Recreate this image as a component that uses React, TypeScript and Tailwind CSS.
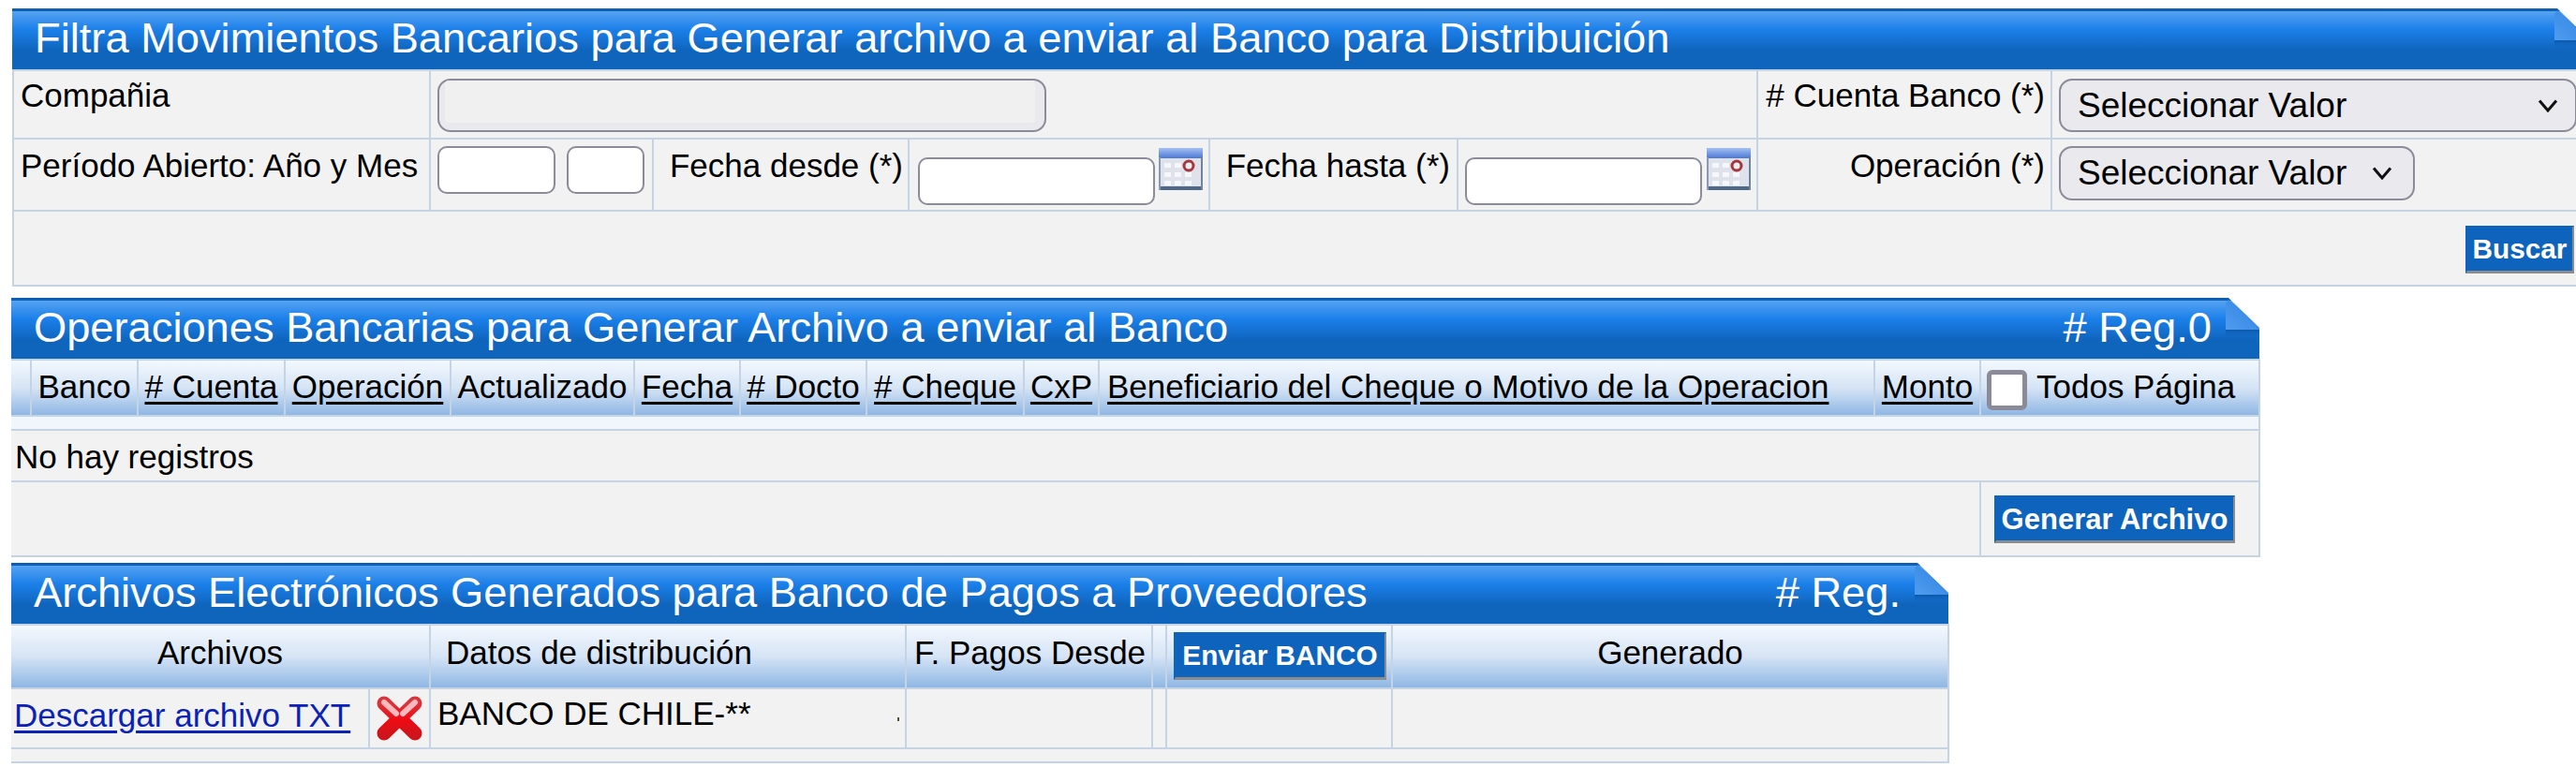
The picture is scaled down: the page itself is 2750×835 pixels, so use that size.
import React from "react";

const sans = "font-['Liberation_Sans',Arial,sans-serif]";
const bd = "border-2 border-[#c4d4e4]";
const td = `${bd} bg-[#f2f2f2] p-0 align-top text-[35px] leading-[38px] text-black`;
const th = `${bd} p-0 align-middle text-[35px] leading-[38px] text-black font-normal bg-gradient-to-b from-[#f3f8fe] via-[#d6e4f5] to-[#8fb7e4]`;
const field = "block rounded-[10px] border-2 border-[#8b8b99] bg-white";
const btn =
  "bg-[#0e63bd] text-white font-bold leading-none border-t-2 border-l-2 border-[#0e63bd] border-r-2 border-b-[3px] border-r-[#8c8c8c] border-b-[#8c8c8c]";
const sel =
  "flex items-center justify-between rounded-[14px] border-2 border-[#8b8b99] bg-[#e9e9ee] pl-[18px] text-[37px] text-black";

function Fold({ right = 0, id }: { right?: number; id: string }) {
  return (
    <svg className="absolute top-0" style={{ right }} width="36" height="46" viewBox="0 0 36 46">
      <defs>
        <linearGradient id={id} x1="0" y1="1" x2="1" y2="0">
          <stop offset="0" stopColor="#4f9df0" />
          <stop offset="1" stopColor="#2f80e0" />
        </linearGradient>
        <linearGradient id={id + "s"} x1="0" y1="0" x2="0" y2="1">
          <stop offset="0" stopColor="#0a4f9c" stopOpacity="0.75" />
          <stop offset="1" stopColor="#0e63bd" stopOpacity="0" />
        </linearGradient>
      </defs>
      <rect x="0" y="34" width="36" height="8" fill={`url(#${id}s)`} />
      <polygon points="3,2 36,32 36,34 0,34 0,6" fill={`url(#${id})`} />
      <polygon points="3,0 36,0 36,32" fill="#ffffff" />
    </svg>
  );
}

function Header({
  title,
  reg,
  foldRight = 0,
  id,
}: {
  title: string;
  reg?: string;
  foldRight?: number;
  id: string;
}) {
  return (
    <div className="relative flex h-[65px] items-center justify-between overflow-hidden bg-[linear-gradient(#0e5fb4_0,#0e5fb4_3px,#55a3f2_3px,#1b7fe9_35%,#0f64bc_70%)] pl-[24px] pr-[51px] text-[45.25px] leading-none text-white">
      <span className="-mt-[2px]">{title}</span>
      {reg && <span className="-mt-[2px]">{reg}</span>}
      <Fold right={foldRight} id={id} />
    </div>
  );
}

function Chevron() {
  return (
    <svg width="22" height="14" viewBox="0 0 22 14" className="shrink-0">
      <path d="M2 1.5 L11 12 L20 1.5" fill="none" stroke="#111" strokeWidth="3" />
    </svg>
  );
}

function Calendar() {
  return (
    <svg width="47" height="45" viewBox="0 0 47 45" className="mt-[9px] shrink-0">
      <defs>
        <linearGradient id="calb" x1="0" y1="0" x2="0" y2="1">
          <stop offset="0" stopColor="#a5c0f2" />
          <stop offset="1" stopColor="#4a78d6" />
        </linearGradient>
      </defs>
      <rect width="47" height="45" fill="#dfe2ea" />
      <rect width="47" height="11" fill="url(#calb)" />
      <rect y="41" width="47" height="4" fill="#4f6788" />
      <rect x="45" y="10" width="2" height="35" fill="#6f83a2" />
      <rect y="10" width="2" height="35" fill="#8a9ab4" />
      {[6, 17, 28].map((x) =>
        [16, 26, 35].map((y) => (
          <rect key={`${x}-${y}`} x={x} y={y} width="7" height="5" fill="#f6f7fa" />
        )),
      )}
      <circle cx="32" cy="19" r="5" fill="#eee" stroke="#a8343c" strokeWidth="3" />
    </svg>
  );
}

function RedX() {
  return (
    <svg width="51" height="50" viewBox="0 0 51 50" className="block">
      <defs>
        <linearGradient id="xr" x1="0" y1="0" x2="0" y2="1">
          <stop offset="0" stopColor="#d8343c" />
          <stop offset="0.55" stopColor="#f00a12" />
          <stop offset="1" stopColor="#d0141c" />
        </linearGradient>
      </defs>
      <path d="M9 9 L42 41 M42 9 L9 41" stroke="url(#xr)" strokeWidth="15" strokeLinecap="round" />
      <path d="M9 8 L22 20 M42 8 L29 20" stroke="#ffb9bc" strokeWidth="6" strokeLinecap="round" />
    </svg>
  );
}

function Lnk({ children }: { children: React.ReactNode }) {
  return <span className="underline underline-offset-[4px]">{children}</span>;
}

export default function App() {
  return (
    <div className={`${sans} w-[2750px] bg-white pt-[9px]`}>
      {/* Filtros */}
      <section className="ml-[13px] w-[2737px]">
        <Header
          id="f1"
          foldRight={-13}
          title="Filtra Movimientos Bancarios para Generar archivo a enviar al Banco para Distribuición"
        />
        <table className="w-[2737px] table-fixed border-collapse">
          <colgroup>
            <col className="w-[445px]" />
            <col className="w-[238px]" />
            <col className="w-[273px]" />
            <col className="w-[321px]" />
            <col className="w-[265px]" />
            <col className="w-[320px]" />
            <col className="w-[314px]" />
            <col className="w-[561px]" />
          </colgroup>
          <tbody>
            <tr className="h-[73px]">
              <td className={`${td} pl-[7px] pt-[7px]`}>Compañia</td>
              <td colSpan={5} className={`${td} pl-[7px] pt-[8px]`}>
                <div className="h-[57px] w-[650px] rounded-[14px] border-2 border-[#8b8b99] bg-[#e9e9ee] p-[0_10px_8px_6px]">
                  <div className="h-full rounded-[4px] bg-[#f0f0f0]" />
                </div>
              </td>
              <td className={`${td} pr-[6px] pt-[7px] text-right whitespace-nowrap`}># Cuenta Banco (*)</td>
              <td className={`${td} pl-[7px] pt-[8px]`}>
                <div className={`${sel} h-[57px] w-[553px] pr-[18px]`}>
                  <span>Seleccionar Valor</span>
                  <Chevron />
                </div>
              </td>
            </tr>
            <tr className="h-[77px]">
              <td className={`${td} pl-[7px] pt-[9px] whitespace-nowrap`}>Período Abierto: Año y Mes</td>
              <td className={`${td} pl-[7px] pt-[7px]`}>
                <div className="flex gap-[12px]">
                  <div className={`${field} h-[51px] w-[126px]`} />
                  <div className={`${field} h-[51px] w-[83px]`} />
                </div>
              </td>
              <td className={`${td} pr-[5px] pt-[9px] text-right whitespace-nowrap`}>Fecha desde (*)</td>
              <td className={`${td} pl-[9px]`}>
                <div className="flex items-start gap-[4px]">
                  <div className={`${field} mt-[19px] h-[51px] w-[253px]`} />
                  <Calendar />
                </div>
              </td>
              <td className={`${td} pr-[7px] pt-[9px] text-right whitespace-nowrap`}>Fecha hasta (*)</td>
              <td className={`${td} pl-[7px]`}>
                <div className="flex items-start gap-[5px]">
                  <div className={`${field} mt-[19px] h-[51px] w-[253px]`} />
                  <Calendar />
                </div>
              </td>
              <td className={`${td} pr-[6px] pt-[9px] text-right whitespace-nowrap`}>Operación (*)</td>
              <td className={`${td} pl-[7px] pt-[7px]`}>
                <div className={`${sel} h-[58px] w-[380px] pr-[22px]`}>
                  <span>Seleccionar Valor</span>
                  <Chevron />
                </div>
              </td>
            </tr>
            <tr className="h-[80px]">
              <td colSpan={8} className={`${td} pr-0 pt-[15px] text-right`}>
                <button className={`${btn} mr-[2px] h-[51px] w-[116px] text-[29.75px]`}>Buscar</button>
              </td>
            </tr>
          </tbody>
        </table>
      </section>

      {/* Operaciones */}
      <section className="ml-[12px] mt-[12px] w-[2400px]">
        <Header id="f2" title="Operaciones Bancarias para Generar Archivo a enviar al Banco" reg="# Reg.0" />
        <table className="w-[2400px] table-fixed border-collapse">
          <colgroup>
            <col className="w-[21px]" />
            <col className="w-[114px]" />
            <col className="w-[157px]" />
            <col className="w-[177px]" />
            <col className="w-[196px]" />
            <col className="w-[113px]" />
            <col className="w-[135px]" />
            <col className="w-[168px]" />
            <col className="w-[80px]" />
            <col className="w-[828px]" />
            <col className="w-[113px]" />
            <col className="w-[298px]" />
          </colgroup>
          <tbody>
            <tr className="h-[60px]">
              <th className={`${th} border-l-0`} />
              <th className={`${th} pb-[2px] text-center whitespace-nowrap`}>Banco</th>
              <th className={`${th} pb-[2px] text-center whitespace-nowrap`}><Lnk># Cuenta</Lnk></th>
              <th className={`${th} pb-[2px] text-center whitespace-nowrap`}><Lnk>Operación</Lnk></th>
              <th className={`${th} pb-[2px] text-center whitespace-nowrap`}>Actualizado</th>
              <th className={`${th} pb-[2px] text-center whitespace-nowrap`}><Lnk>Fecha</Lnk></th>
              <th className={`${th} pb-[2px] text-center whitespace-nowrap`}><Lnk># Docto</Lnk></th>
              <th className={`${th} pb-[2px] text-center whitespace-nowrap`}><Lnk># Cheque</Lnk></th>
              <th className={`${th} pb-[2px] text-center whitespace-nowrap`}><Lnk>CxP</Lnk></th>
              <th className={`${th} pb-[2px] pl-[8px] text-left whitespace-nowrap`}><Lnk>Beneficiario del Cheque o Motivo de la Operacion</Lnk></th>
              <th className={`${th} pb-[2px] text-center whitespace-nowrap`}><Lnk>Monto</Lnk></th>
              <th className={th}>
                <div className="flex items-center gap-[10px] pl-[6px] whitespace-nowrap">
                  <span className="mt-[5px] h-[43px] w-[43px] shrink-0 rounded-[6px] border-[5px] border-[#8a8a99] bg-white" />
                  <span className="-mt-[2px]">Todos Página</span>
                </div>
              </th>
            </tr>
            <tr className="h-[15px]">
              <td colSpan={12} className={`${bd} border-l-0 bg-[#f1f6fc] p-0`} />
            </tr>
            <tr className="h-[55px]">
              <td colSpan={12} className={`${td} border-l-0 pl-[4px] pt-[9px]`}>No hay registros</td>
            </tr>
            <tr className="h-[80px]">
              <td colSpan={11} className={`${td} border-l-0`} />
              <td className={`${td} pl-[14px] pt-[14px]`}>
                <button className={`${btn} h-[51px] w-[257px] text-[31px] whitespace-nowrap`}>Generar Archivo</button>
              </td>
            </tr>
          </tbody>
        </table>
      </section>

      {/* Archivos */}
      <section className="ml-[12px] mt-[6px] w-[2068px]">
        <Header id="f3" title="Archivos Electrónicos Generados para Banco de Pagos a Proveedores" reg="# Reg." />
        <table className="w-[2068px] table-fixed border-collapse">
          <colgroup>
            <col className="w-[382px]" />
            <col className="w-[65px]" />
            <col className="w-[508px]" />
            <col className="w-[263px]" />
            <col className="w-[15px]" />
            <col className="w-[241px]" />
            <col className="w-[594px]" />
          </colgroup>
          <tbody>
            <tr className="h-[68px]">
              <th colSpan={2} className={`${th} border-l-0 pb-[8px] text-center`}>Archivos</th>
              <th className={`${th} pb-[8px] pl-[16px] text-left`}>Datos de distribución</th>
              <th className={`${th} pb-[8px] pl-[8px] text-left whitespace-nowrap`}>F. Pagos Desde</th>
              <th className={th} />
              <th className={`${th} pl-[7px]`}>
                <button className={`${btn} mb-[2px] block h-[51px] w-[227px] text-[29.75px] whitespace-nowrap`}>Enviar BANCO</button>
              </th>
              <th className={`${th} pb-[8px] text-center`}>Generado</th>
            </tr>
            <tr className="h-[64px]">
              <td className={`${td} border-l-0 pl-[3px] pt-[9px] whitespace-nowrap`}>
                <span className="text-[#0a22b8] underline underline-offset-[4px]">Descargar archivo TXT</span>
              </td>
              <td className={`${td} pl-[6px] pt-[6px]`}>
                <RedX />
              </td>
              <td className={`${td} pl-[7px] pt-[7px]`}>
                <div className="flex items-start justify-between pr-[6px]">
                  <span>BANCO DE CHILE-**</span>
                  <span className="mt-[23px] h-[4px] w-[2px] bg-[#5a4a30]" />
                </div>
              </td>
              <td className={td} />
              <td className={td} />
              <td className={td} />
              <td className={td} />
            </tr>
            <tr className="h-[15px]">
              <td colSpan={7} className={`${bd} border-l-0 bg-[#f2f2f2] p-0`} />
            </tr>
          </tbody>
        </table>
      </section>
    </div>
  );
}
